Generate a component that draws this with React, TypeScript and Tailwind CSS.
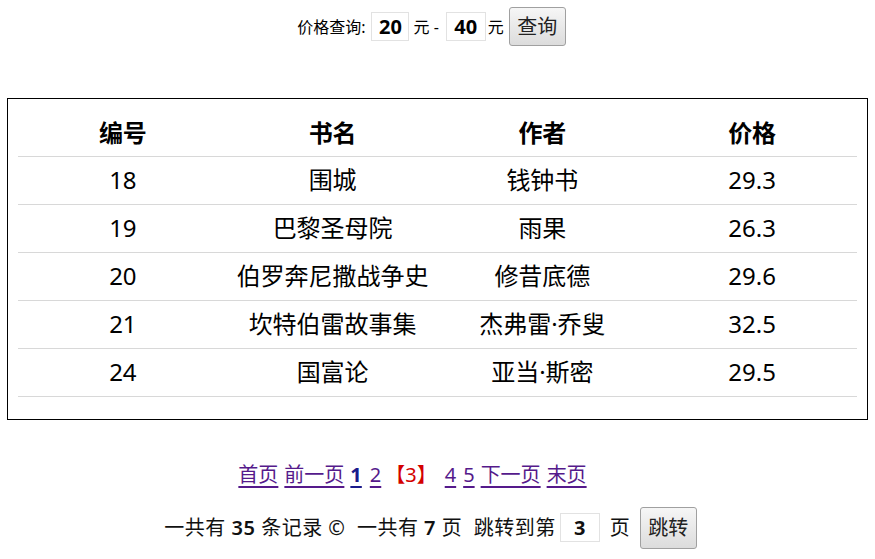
import React from 'react';

const books = [
  { id: 18, name: '围城', author: '钱钟书', price: '29.3' },
  { id: 19, name: '巴黎圣母院', author: '雨果', price: '26.3' },
  { id: 20, name: '伯罗奔尼撒战争史', author: '修昔底德', price: '29.6' },
  { id: 21, name: '坎特伯雷故事集', author: '杰弗雷·乔叟', price: '32.5' },
  { id: 24, name: '国富论', author: '亚当·斯密', price: '29.5' },
];

const btn =
  'border border-[#a0a0a0] rounded-[3px] bg-gradient-to-b from-[#f6f6f6] to-[#dcdcdc] text-[20px] leading-none text-[#222]';

export default function App() {
  return (
    <div className="w-[875px] h-[559px] bg-white text-black font-['Noto_Sans','Noto_Sans_CJK_SC',sans-serif] overflow-hidden">
      {/* price filter */}
      <div className="mt-[7px] h-[39px] flex items-center justify-center pr-3 text-[16px]">
        <span>价格查询:</span>
        <input
          readOnly
          value="20"
          className="ml-[6px] w-[38px] h-[29px] border border-[#e2e2e2] text-center text-[20px] font-bold outline-none"
        />
        <span className="ml-[4px]">元 -</span>
        <input
          readOnly
          value="40"
          className="ml-[7px] w-[40px] h-[29px] border border-[#e2e2e2] text-center text-[20px] font-bold outline-none"
        />
        <span className="ml-[2px]">元</span>
        <button className={`${btn} ml-[5px] w-[57px] h-[39px]`}>查询</button>
      </div>

      {/* table */}
      <div className="mt-[52px] mx-[7px] border border-black px-[10px] pt-[11px] pb-[22px]">
        <table className="w-full table-fixed border-collapse text-[24px]">
          <thead>
            <tr className="border-b border-[#d8d8d8]">
              <th className="h-[46px] font-bold">编号</th>
              <th className="font-bold">书名</th>
              <th className="font-bold">作者</th>
              <th className="font-bold">价格</th>
            </tr>
          </thead>
          <tbody>
            {books.map((b) => (
              <tr key={b.id} className="border-b border-[#d8d8d8] text-center">
                <td className="h-[48px]">{b.id}</td>
                <td>{b.name}</td>
                <td>{b.author}</td>
                <td>{b.price}</td>
              </tr>
            ))}
          </tbody>
        </table>
      </div>

      {/* pagination */}
      <div className="mt-[40px] h-[30px] flex items-center justify-center pr-[50px] text-[20px] gap-[6px]">
        <a className="text-[#551a8b] underline underline-offset-4">首页</a>
        <a className="text-[#551a8b] underline underline-offset-4">前一页</a>
        <a className="text-[#1a1a8b] font-bold underline underline-offset-4">1</a>
        <a className="text-[#551a8b] underline underline-offset-4 ml-[2px]">2</a>
        <span className="text-[#d40000] -ml-[2px]">【3】</span>
        <a className="text-[#551a8b] underline underline-offset-4 ml-[2px]">4</a>
        <a className="text-[#551a8b] underline underline-offset-4 ml-[1px]">5</a>
        <a className="text-[#551a8b] underline underline-offset-4">下一页</a>
        <a className="text-[#551a8b] underline underline-offset-4">末页</a>
      </div>

      {/* summary / jump */}
      <div className="mt-[17px] h-[42px] flex items-center justify-center pr-[14px] text-[20px] text-[#111]">
        <span className="tracking-[0.5px]">一共有 <b className="font-semibold">35</b> 条记录 ©&nbsp; 一共有 <b className="font-semibold">7</b> 页&nbsp; 跳转到第</span>
        <input
          readOnly
          value="3"
          className="ml-[4px] w-[40px] h-[29px] border border-[#e2e2e2] text-center text-[20px] font-bold outline-none"
        />
        <span className="ml-[10px]">页</span>
        <button className={`${btn} ml-[10px] w-[57px] h-[42px]`}>跳转</button>
      </div>
    </div>
  );
}
